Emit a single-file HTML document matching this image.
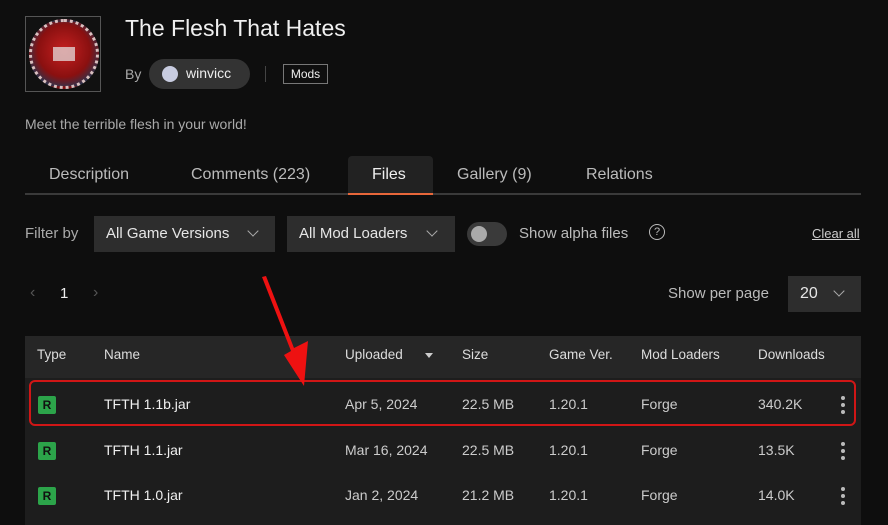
<!DOCTYPE html>
<html><head><style>
*{margin:0;padding:0;box-sizing:border-box}
body{width:888px;height:525px;background:#0e0e0e;font-family:"Liberation Sans",sans-serif;color:#ddd;position:relative;overflow:hidden}
.a{position:absolute;white-space:nowrap}
.sel{position:absolute;background:#2d2d2d;color:#e6e6e6;font-size:15px;height:36px;line-height:36px;padding-left:12px}
.chev{position:absolute;width:8px;height:8px;border-right:1.5px solid #aaa;border-bottom:1.5px solid #aaa;transform:rotate(45deg)}
.th{position:absolute;top:347px;font-size:13.5px;color:#ddd}
.td{position:absolute;font-size:14px;color:#ccc}
.r{position:absolute;left:38px;width:18px;height:18px;background:#2ca44a;color:#111;font-size:12px;font-weight:bold;text-align:center;line-height:18px;border-radius:2px}
.dots{position:absolute;left:841px;width:4px}
.dots i{display:block;width:4px;height:4px;border-radius:2px;background:#bbb;margin-bottom:3px}
.tab{position:absolute;top:166px;font-size:16px;color:#bbb}
</style></head><body>
<div class="a" style="left:25px;top:16px;width:76px;height:76px;border:1px solid #555;background:#111"></div>
<div class="a" style="left:29px;top:19px;width:70px;height:70px;border-radius:50%;border:3px dotted #d9c0c0;background:radial-gradient(circle at 50% 45%,#c52020 0%,#8a1010 55%,#2a3550 80%)"></div>
<div class="a" style="left:53px;top:47px;width:22px;height:14px;background:#e0d0d0;opacity:.8"></div>
<div class="a" style="left:125px;top:15px;font-size:23px;color:#f0f0f0">The Flesh That Hates</div>
<div class="a" style="left:125px;top:66px;font-size:14px;color:#aaa">By</div>
<div class="a" style="left:149px;top:59px;width:101px;height:30px;border-radius:15px;background:#333"></div>
<div class="a" style="left:162px;top:66px;width:16px;height:16px;border-radius:50%;background:#c8cce0"></div>
<div class="a" style="left:186px;top:65px;font-size:14px;color:#eee">winvicc</div>
<div class="a" style="left:265px;top:66px;width:1px;height:16px;background:#444"></div>
<div class="a" style="left:283px;top:64px;width:45px;height:20px;border:1px solid #777;font-size:12px;color:#eee;text-align:center;line-height:18px">Mods</div>
<div class="a" style="left:25px;top:116px;font-size:14px;color:#aaa">Meet the terrible flesh in your world!</div>
<div class="a" style="left:348px;top:156px;width:85px;height:39px;background:#222;border-radius:4px 4px 0 0"></div>
<div class="a" style="left:25px;top:193px;width:836px;height:2px;background:#3a3a3a"></div>
<div class="a" style="left:348px;top:193px;width:85px;height:2px;background:#e8673a"></div>
<div class="tab" style="left:49px">Description</div>
<div class="tab" style="left:191px">Comments (223)</div>
<div class="tab" style="left:372px;color:#f0f0f0">Files</div>
<div class="tab" style="left:457px">Gallery (9)</div>
<div class="tab" style="left:586px">Relations</div>
<div class="a" style="left:25px;top:225px;font-size:15px;color:#aaa">Filter by</div>
<div class="sel" style="left:94px;top:216px;width:181px">All Game Versions</div>
<div class="chev" style="left:249px;top:227px"></div>
<div class="sel" style="left:287px;top:216px;width:168px">All Mod Loaders</div>
<div class="chev" style="left:428px;top:227px"></div>
<div class="a" style="left:467px;top:222px;width:40px;height:24px;border-radius:12px;background:#3a3a3a"></div>
<div class="a" style="left:471px;top:226px;width:16px;height:16px;border-radius:50%;background:#aaa"></div>
<div class="a" style="left:519px;top:225px;font-size:15px;color:#bbb">Show alpha files</div>
<div class="a" style="left:649px;top:224px;width:16px;height:16px;border:1px solid #bbb;border-radius:50%;font-size:11px;text-align:center;line-height:14px;color:#bbb">?</div>
<div class="a" style="left:812px;top:226px;font-size:13px;color:#ccc;text-decoration:underline">Clear all</div>
<div class="a" style="left:30px;top:284px;font-size:16px;color:#555">‹</div>
<div class="a" style="left:60px;top:285px;font-size:15px;color:#eee">1</div>
<div class="a" style="left:93px;top:284px;font-size:16px;color:#555">›</div>
<div class="a" style="left:668px;top:285px;font-size:15px;color:#bbb">Show per page</div>
<div class="sel" style="left:788px;top:276px;width:73px;height:36px;font-size:16px">20</div>
<div class="chev" style="left:835px;top:287px"></div>
<div class="a" style="left:25px;top:336px;width:836px;height:189px;background:#1d1d1d"></div>
<div class="a" style="left:25px;top:336px;width:836px;height:42px;background:#262626"></div>
<div class="th" style="left:37px">Type</div>
<div class="th" style="left:104px">Name</div>
<div class="th" style="left:345px">Uploaded</div>
<div class="a" style="left:425px;top:353px;border-left:4px solid transparent;border-right:4px solid transparent;border-top:5px solid #ccc"></div>
<div class="th" style="left:462px">Size</div>
<div class="th" style="left:549px">Game Ver.</div>
<div class="th" style="left:641px">Mod Loaders</div>
<div class="th" style="left:758px">Downloads</div>
<div class="a" style="left:29px;top:380px;width:827px;height:46px;border:2px solid #d01616;border-radius:6px"></div>
<div class="r" style="top:396px">R</div><div class="r" style="top:442px">R</div><div class="r" style="top:487px">R</div>
<div class="td" style="left:104px;top:396px;color:#f0f0f0">TFTH 1.1b.jar</div>
<div class="td" style="left:104px;top:442px;color:#f0f0f0">TFTH 1.1.jar</div>
<div class="td" style="left:104px;top:487px;color:#f0f0f0">TFTH 1.0.jar</div>
<div class="td" style="left:345px;top:396px">Apr 5, 2024</div>
<div class="td" style="left:345px;top:442px">Mar 16, 2024</div>
<div class="td" style="left:345px;top:487px">Jan 2, 2024</div>
<div class="td" style="left:462px;top:396px">22.5 MB</div><div class="td" style="left:462px;top:442px">22.5 MB</div><div class="td" style="left:462px;top:487px">21.2 MB</div>
<div class="td" style="left:549px;top:396px">1.20.1</div><div class="td" style="left:549px;top:442px">1.20.1</div><div class="td" style="left:549px;top:487px">1.20.1</div>
<div class="td" style="left:641px;top:396px">Forge</div><div class="td" style="left:641px;top:442px">Forge</div><div class="td" style="left:641px;top:487px">Forge</div>
<div class="td" style="left:758px;top:396px">340.2K</div><div class="td" style="left:758px;top:442px">13.5K</div><div class="td" style="left:758px;top:487px">14.0K</div>
<div class="dots" style="top:396px"><i></i><i></i><i></i></div>
<div class="dots" style="top:442px"><i></i><i></i><i></i></div>
<div class="dots" style="top:487px"><i></i><i></i><i></i></div>
<svg class="a" style="left:0;top:0" width="888" height="525"><polygon points="262,277 266,276 294,348 308,341 304,386 284,355 291,351" fill="#ee1111"/></svg>
</body></html>
